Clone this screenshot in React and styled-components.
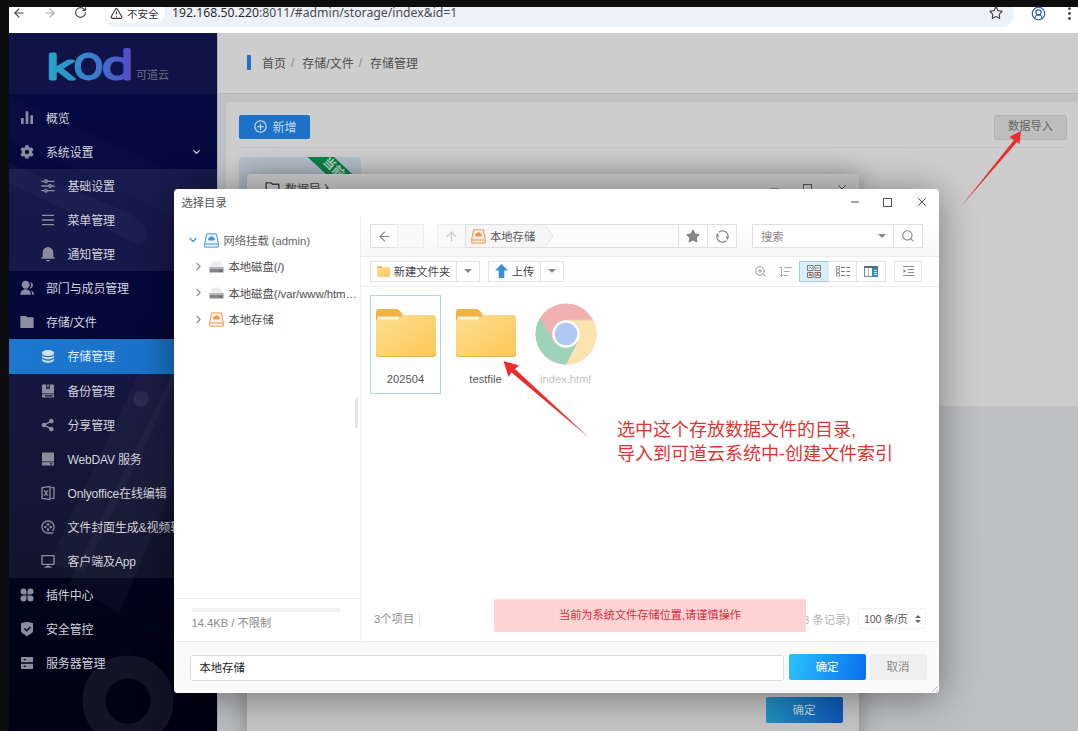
import React from 'react';
import styled, { createGlobalStyle, css } from 'styled-components';
import { FaCog, FaStar } from 'react-icons/fa';
import {
    RiBarChartFill, RiEqualizerLine, RiMenuLine, RiNotification3Fill, RiGroupFill, RiFolderFill,
    RiDatabase2Fill, RiShareFill, RiFileExcel2Line, RiMovie2Line, RiRefreshLine,
    RiComputerLine, RiShieldCheckFill, RiServerFill, RiAddCircleLine, RiFolderLine
} from 'react-icons/ri';
import {
    ArrowLeft, ArrowRight, ArrowUp, RotateCw, TriangleAlert, Star, CircleUserRound, EllipsisVertical,
    ChevronDown, ChevronRight, Minus, X, Search, ZoomIn
} from 'lucide-react';

const GearIcon = styled(FaCog)`
padding: 1px;
`;

const PluginIcon = () => (
    <svg viewBox="-1 -1 16 16" fill="currentColor">
        <path d="M3.5 0.5a3 3 0 0 1 3 3v3h-3a3 3 0 0 1 0-6zM10.5 0.5a3 3 0 0 1 0 6h-3v-3a3 3 0 0 1 3-3zM3.5 7.5h3v3a3 3 0 1 1-3-3zM7.5 7.5h3a3 3 0 1 1-3 3z" />
    </svg>
);

const DavIcon = () => (
    <svg viewBox="0 0 16 16" fill="currentColor">
        <path d="M3 1.500h10a1 1 0 0 1 1 1V10.500H2V2.500a1 1 0 0 1 1-1z" />
        <path d="M2 11.300h12V14a.6.6 0 0 1-.6.6H2.600A.6.6 0 0 1 2 14zM10 12.300v1.300h2.600v-1.300z" fillRule="evenodd" />
    </svg>
);

const BackupIcon = () => (
    <svg viewBox="0 0 16 16" fill="currentColor">
        <path d="M3 1.500h3.200v5.200L8 5.300l1.800 1.400V1.500H13a1 1 0 0 1 1 1V10.500H2V2.500a1 1 0 0 1 1-1z" />
        <path d="M7.200 1.500h1.600v2.400H7.200z" />
        <path d="M2 11.300h12V14a.6.6 0 0 1-.6.6H2.600A.6.6 0 0 1 2 14zM5 12.300v1.300h7.600v-1.300z" fillRule="evenodd" />
    </svg>
);

const menu = [
    { items: [
        { icon: <RiBarChartFill />, name: '概览' },
        { icon: <GearIcon />, name: '系统设置', open: true },
    ] },
    { sub: true, items: [
        { icon: <RiEqualizerLine />, name: '基础设置' },
        { icon: <RiMenuLine />, name: '菜单管理' },
        { icon: <RiNotification3Fill />, name: '通知管理' },
    ] },
    { items: [
        { icon: <RiGroupFill />, name: '部门与成员管理' },
        { icon: <RiFolderFill />, name: '存储/文件' },
    ] },
    { sub: true, items: [
        { icon: <RiDatabase2Fill />, name: '存储管理', active: true },
        { icon: <BackupIcon />, name: '备份管理' },
        { icon: <RiShareFill />, name: '分享管理' },
        { icon: <DavIcon />, name: 'WebDAV 服务' },
        { icon: <RiFileExcel2Line />, name: 'Onlyoffice在线编辑' },
        { icon: <RiMovie2Line />, name: '文件封面生成&视频转码' },
        { icon: <RiComputerLine />, name: '客户端及App' },
    ] },
    { items: [
        { icon: <PluginIcon />, name: '插件中心' },
        { icon: <RiShieldCheckFill />, name: '安全管控' },
        { icon: <RiServerFill />, name: '服务器管理' },
    ] },
];

const Logo = () => (
    <svg width="92" height="60" viewBox="-4 -14 92 60">
        <defs>
            <linearGradient id="kod" gradientUnits="userSpaceOnUse" x1="0" y1="0" x2="84" y2="0">
                <stop offset="0" stopColor="#26a5c4" />
                <stop offset="0.5" stopColor="#3a7fce" />
                <stop offset="1" stopColor="#5548c6" />
            </linearGradient>
        </defs>
        <g fill="url(#kod)" stroke="url(#kod)" strokeWidth="2.8" strokeLinejoin="round" fontFamily="Roboto, sans-serif" fontWeight="300">
            <text x="-2" y="31" fontSize="34" textLength="27" lengthAdjust="spacingAndGlyphs">k</text>
            <text x="25" y="31" fontSize="46" textLength="29" lengthAdjust="spacingAndGlyphs">o</text>
            <text x="53" y="31" fontSize="39" textLength="31" lengthAdjust="spacingAndGlyphs">d</text>
        </g>
    </svg>
);

const SideArt = () => (
    <svg width="208" height="698" viewBox="0 0 208 698" fill="none">
        <path d="M0 130L120 180Q150 200 130 212L0 150z" fill="#fff" fillOpacity="0.03" />
        <path d="M0 62L208 160V205L0 105z" fill="#fff" fillOpacity="0.015" />
        <path d="M145 308H185L75 540L40 530z" fill="#fff" fillOpacity="0.03" />
        <path d="M180 308L208 350L110 580L60 550z" fill="#fff" fillOpacity="0.03" />
        <circle cx="132" cy="366" r="8" fill="#fff" fillOpacity="0.07" />
        <circle cx="119" cy="668" r="34" stroke="#fff" strokeOpacity="0.07" strokeWidth="23" />
    </svg>
);

const Disk = ({ color }) => (
    <svg width="15" height="15" viewBox="0 0 15 15" fill="none" stroke={color}>
        <path d="M2.6 0.9h9.8l1.9 9.4v3.8H0.7v-3.8z" fill={color} fillOpacity="0.08" />
        <path d="M0.7 11h13.6" />
        <path d="M5 7.6a1.6 1.6 0 0 1 0.5-3 2.2 2.2 0 0 1 4 0 1.6 1.6 0 0 1 0.5 3z" fill={color} stroke="none" />
    </svg>
);

const Drive = () => (
    <svg width="15" height="15" viewBox="0 0 15 15">
        <path d="M3.5 2.5h8l3 6.500H0.5z" fill="#ececed" />
        <path d="M0.5 8.5h14v5H0.5z" fill="#848588" />
        <path d="M0.5 8.5h14v1.5H0.5z" fill="#b5b6b8" />
        <path d="M10 11.500h3v1h-3z" fill="#555" />
    </svg>
);

const Folder = ({ w = 60, h = 48 }) => (
    <svg width={w} height={h} viewBox="0 0 60 48">
        <defs>
            <linearGradient id="fold" x1="0" y1="0" x2="1" y2="1">
                <stop offset="0" stopColor="#ffe092" />
                <stop offset="1" stopColor="#fcc654" />
            </linearGradient>
        </defs>
        <path d="M0 3a3 3 0 0 1 3-3h17c3 0 4 1.500 5 3.500L27 6h30v12H0z" fill="#f2b342" />
        <path d="M1.500 7.500h22v6h-22z" fill="#fff4d6" />
        <path d="M0 13c0-2 1-2.600 3-2.600h18c3 0 4-4.400 7-4.400h29a3 3 0 0 1 3 3v36a3 3 0 0 1-3 3H3a3 3 0 0 1-3-3z" fill="url(#fold)" />
        <path d="M0 44.500a3 3 0 0 0 3 3h54a3 3 0 0 0 3-3" fill="none" stroke="#e2b047" />
    </svg>
);

const Chrome = () => (
    <svg width="62" height="62" viewBox="-31 -31 62 62">
        <circle r="30.500" fill="#f1b1b1" />
        <path d="M0 -14H27.100A30.500 30.500 0 0 1 0 30.500L12 7z" fill="#fbe3b0" />
        <path d="M-26 -15.800A30.500 30.500 0 0 0 0 30.500L11.500 8L-12 7z" fill="#9fd3b9" />
        <path d="M0 -14H27" stroke="#f3c9a6" />
        <circle r="13.700" fill="#fff" />
        <circle r="11.300" fill="#afc8f6" />
    </svg>
);

const WindowButtons = () => (
    <Controls>
        <Minus size={12} strokeWidth={2} />
        <i />
        <X size={14} strokeWidth={1.6} />
    </Controls>
);

const App = () => {
    return (
        <Screen>
            <GlobalStyle />
            <BrowserBar>
                <NavIcons>
                    <ArrowLeft size={14} />
                    <ArrowRight size={14} color="#a9a9a9" />
                    <RotateCw size={13} />
                </NavIcons>
                <Address>
                    <Unsafe><TriangleAlert size={13} />不安全</Unsafe>
                    <Url><b>192.168.50.220</b>:8011/#admin/storage/index&amp;id=1</Url>
                    <Star size={14} />
                </Address>
                <CircleUserRound size={15} color="#2a62b8" />
                <EllipsisVertical size={17} />
            </BrowserBar>
            <Page>
                <Sidebar>
                    <Art><SideArt /></Art>
                    <Brand><Logo /><span>可道云</span></Brand>
                    {menu.map((group, i) => (
                        <Group key={i} $sub={group.sub}>
                            {group.items.map((item) => (
                                <MenuItem key={item.name} $sub={group.sub} $active={item.active}>
                                    {item.icon}
                                    <p>{item.name}</p>
                                    {item.open && <ChevronDown size={13} strokeWidth={3} className="arrow" />}
                                </MenuItem>
                            ))}
                        </Group>
                    ))}
                </Sidebar>
                <Main>
                    <Crumbs>
                        <i />
                        <span>首页</span><em>/</em><span>存储/文件</span><em>/</em><span>存储管理</span>
                    </Crumbs>
                    <Card>
                        <Actions>
                            <AddButton><RiAddCircleLine size={15} />新增</AddButton>
                            <ImportButton>数据导入</ImportButton>
                        </Actions>
                        <StoreItem><Ribbon>当前</Ribbon></StoreItem>
                    </Card>
                </Main>
            </Page>

            <BackWindow>
                <TitleBar $back>
                    <RiFolderLine size={17} />
                    <p>数据导入</p>
                    <WindowButtons />
                </TitleBar>
                <BackFooter><OkButton $dim>确定</OkButton></BackFooter>
                <Grip $dim />
            </BackWindow>

            <Picker>
                <TitleBar>
                    <p>选择目录</p>
                    <WindowButtons />
                </TitleBar>
                <Body>
                    <Tree>
                        <TreeRow $root>
                            <ChevronDown size={12} color="#3f95e4" strokeWidth={2.5} />
                            <Disk color="#3b97ea" />网络挂载 (admin)
                        </TreeRow>
                        <TreeRow><ChevronRight size={13} /><Drive />本地磁盘(/)</TreeRow>
                        <TreeRow><ChevronRight size={13} /><Drive />本地磁盘(/var/www/htm…</TreeRow>
                        <TreeRow><ChevronRight size={13} /><Disk color="#f0964a" />本地存储</TreeRow>
                        <Handle />
                        <Space>
                            <div />
                            <p>14.4KB / 不限制</p>
                        </Space>
                    </Tree>
                    <Content>
                        <PathBar>
                            <Cell $w={28}><ArrowLeft size={15} strokeWidth={1.7} /></Cell>
                            <Cell $w={27} $joined $off />
                            <Cell $w={29} $gap={13} $off><ArrowUp size={15} /></Cell>
                            <PathField>
                                <Crumb><Disk color="#f0964a" />本地存储</Crumb>
                                <svg width="9" height="22" viewBox="0 0 9 22" fill="#f5f5f5" stroke="#e3e3e3">
                                    <path d="M0 0L8 11L0 22" />
                                </svg>
                            </PathField>
                            <Cell $w={30} $joined><FaStar size={14} /></Cell>
                            <Cell $w={30} $joined><RiRefreshLine size={15} /></Cell>
                            <SearchField><p>搜索</p><Caret /></SearchField>
                            <Cell $w={30} $joined><Search size={14} strokeWidth={1.8} /></Cell>
                        </PathBar>
                        <ToolBar>
                            <Tool $w={87}><Folder w={13} h={11} />新建文件夹</Tool>
                            <Tool $w={24} $joined><Caret /></Tool>
                            <Tool $w={53} $gap={8}>
                                <svg width="13" height="14" viewBox="0 0 13 14"><path d="M6.500 0L13 6.500H9.300V14H3.700V6.500H0z" fill="#3b8fd4" /></svg>
                                上传
                            </Tool>
                            <Tool $w={24} $joined><Caret /></Tool>
                            <Views>
                                <ZoomIn size={13} strokeWidth={1.8} />
                                <svg width="13" height="13" viewBox="0 0 13 13" fill="none" stroke="#a5a5a5">
                                    <path d="M2.500 2v9M0.500 9.500l2 2 2-2M0.500 2.500h2M5 2.500h7.500M5 6.500h5.500M5 10.500h4" />
                                </svg>
                            </Views>
                            <Tool $w={30} $on>
                                <svg width="14" height="13" viewBox="0 0 14 13" fill="none" stroke="#777">
                                    <path d="M0.500 0.500h5.500v5h-5.500zM8 0.500h5.500v5H8zM0.500 7.500h5.500v5h-5.500zM8 7.500h5.500v5H8z" fill="#f6fbfd" />
                                    <path d="M2 4l1-2 2 2M9.500 4l1-2 2 2" stroke="#7b8b86" />
                                    <path d="M2 11l1-2 2 2M9.500 11l1-2 2 2" stroke="#c0554c" strokeWidth="1.400" />
                                </svg>
                            </Tool>
                            <Tool $w={29} $joined>
                                <svg width="14" height="11" viewBox="0 0 14 11" fill="none" stroke="#999">
                                    <path d="M0.500 0.500h3v2.500h-3zM0.500 4h3v2.500h-3zM0.500 7.500h3V10h-3z" />
                                    <path d="M5 1.500h4M10.500 1.500H14M5 5.500h4M10.500 5.500H14M5 9.500h4M10.500 9.500H14" stroke="#777" />
                                </svg>
                            </Tool>
                            <Tool $w={30} $joined>
                                <svg width="14" height="11" viewBox="0 0 14 11">
                                    <path d="M0.500 0.500h13v10h-13z" fill="#fff" stroke="#6f8593" />
                                    <path d="M8 0h6v11H8z" fill="#3487c7" />
                                    <path d="M0 0h14v2H0z" fill="#566f80" />
                                    <path d="M4.500 2v9" stroke="#aab8c0" />
                                    <path d="M10 4.500h3M10 6.500h3M10 8.500h3" stroke="#fff" strokeWidth="0.800" />
                                </svg>
                            </Tool>
                            <Tool $w={28} $gap={8}>
                                <svg width="11" height="10" viewBox="0 0 11 10" fill="none" stroke="#8a8a8a">
                                    <path d="M0 0.500h11M5 3.500h6M5 6.500h6M0 9.500h11" />
                                    <path d="M0.500 3L3 5L0.500 7z" fill="#8a8a8a" stroke="none" />
                                </svg>
                            </Tool>
                        </ToolBar>
                        <Files>
                            <File $selected><Folder /><p>202504</p></File>
                            <File><Folder /><p>testfile</p></File>
                            <File $faded><Chrome /><p>index.html</p></File>
                        </Files>
                        <Status>
                            <p>3个项目</p>
                            <Records>3 条记录)</Records>
                            <PageSize>
                                100 条/页
                                <svg width="6" height="8" viewBox="0 0 6 8" fill="#666"><path d="M3 0l3 3H0zM3 8L0 5h6z" /></svg>
                            </PageSize>
                        </Status>
                    </Content>
                </Body>
                <Footer>
                    <NameInput>本地存储</NameInput>
                    <OkButton>确定</OkButton>
                    <CancelButton>取消</CancelButton>
                </Footer>
                <Toast>当前为系统文件存储位置,请谨慎操作</Toast>
                <Grip />
            </Picker>

            <Note>选中这个存放数据文件的目录,<br />导入到可道云系统中-创建文件索引</Note>
            <Arrows>
                <svg width="1078" height="731" viewBox="0 0 1078 731" fill="#ea2c2a">
                    <path d="M961 206.500L1014 140L1009.500 137L1021 131L1019.500 144L1017 142z" />
                    <path d="M590 438.500L511.500 372.500L508.500 377L503.500 361L519 365.500L515 369z" />
                </svg>
            </Arrows>
        </Screen>
    );
};

export default App;

const GlobalStyle = createGlobalStyle`
* { box-sizing: border-box; }
body {
margin: 0;
background: #0d0d0d;
font-family: "Liberation Sans", "Noto Sans CJK SC", sans-serif;
font-size: 12px;
overflow: hidden;
}
p { margin: 0; }
svg { flex: none; display: block; }
`;

const Screen = styled.div`
position: relative;
width: 1078px;
height: 731px;
padding: 7px 0 0 9px;
overflow: hidden;
background: #0d0d0d;
`;

const BrowserBar = styled.div`
display: flex;
height: 26px;
background: #fff;
padding-right: 2px;
color: #444;
align-items: flex-start;

> svg:nth-of-type(1) { margin: -1px 15px 0 17px; }
> svg:nth-of-type(2) { margin: -2px -2px 0 auto; }
`;

const NavIcons = styled.div`
display: flex;
gap: 17px;
width: 96px;
padding: 0 0 0 3px;
margin-top: -1px;
`;

const Address = styled.div`
display: flex;
width: 909px;
height: 20px;
background: #edf1fa;
border-radius: 0 0 12px 12px;

> svg { margin: -1px 11px 0 auto; }
`;

const Unsafe = styled.div`
display: flex;
align-items: center;
gap: 4px;
width: 60px;
height: 16px;
padding: 0 0 4px 5px;
background: #fff;
border-radius: 0 0 10px 10px;
white-space: nowrap;
font-size: 10.5px;
color: #333;
`;

const Url = styled.div`
margin: -1px 0 0 7px;
font: 12.25px/14px "Noto Sans", sans-serif;
white-space: nowrap;
color: #4b4b4f;

b { font-weight: 400; color: #2c2c2e; }
`;

const Page = styled.div`
display: flex;
height: 698px;
`;

const Sidebar = styled.div`
position: relative;
width: 209px;
border-right: 1px solid #a9afba;
background: linear-gradient(#060a44, #05083a 40%, #02041d 75%, #010212);
overflow: hidden;
`;

const Art = styled.div`
position: absolute;
inset: 0;
`;

const Brand = styled.div`
position: relative;
display: flex;
height: 61px;
margin-bottom: 7px;
padding: 1px 0 0 36px;
background: #0f1347;

span {
    margin: 32px 0 0 -1px;
    font-size: 11px;
    color: #6c6f7e;
    white-space: nowrap;
}
`;

const Group = styled.div`
position: relative;
background: ${({ $sub }) => ($sub ? 'rgba(110, 110, 140, 0.16)' : 'none')};
`;

const MenuItem = styled.div`
display: flex;
align-items: center;
height: 34.07px;
padding-left: ${({ $sub }) => ($sub ? '31px' : '10px')};
color: ${({ $active }) => ($active ? '#e2edf7' : '#d2d3dc')};
background: ${({ $active }) => ($active ? 'linear-gradient(90deg, #1b78cf, #1a70c4)' : 'none')};
white-space: nowrap;

> svg {
    width: 16px;
    height: 16px;
    color: ${({ $active }) => ($active ? '#d5dfe8' : '#8b8d9f')};
}
p {
    margin: -1px 0 0 ${({ $sub }) => ($sub ? '11.500px' : '11px')};
    letter-spacing: -0.15px;
}
.arrow {
    width: 11px;
    margin: 0 15px 0 auto;
    color: #c9cad4;
}
`;

const Main = styled.div`
flex: 1;
background: linear-gradient(#bec2c3, #bcc0c2);
`;

const Crumbs = styled.div`
display: flex;
align-items: center;
height: 61px;
padding: 0 0 1px 29px;
background: #cdcdcd;
border-bottom: 1px solid #b5b5b5;
color: #4f4f4f;

i {
    width: 4px;
    height: 15px;
    margin-right: 11px;
    background: #1d72c8;
    border-radius: 1px;
}
em { margin: 0 8px 0 5px; font-style: normal; color: #8b8b8b; }
`;

const Card = styled.div`
height: 304px;
margin: 8px 0 0 8px;
padding: 13px 11px 0 13px;
background: #cdcdcd;
border-radius: 4px 0 0 0;
`;

const Actions = styled.div`
display: flex;
justify-content: space-between;
height: 33px;
border-bottom: 1px solid #c4c4c4;
`;

const AddButton = styled.div`
display: flex;
align-items: center;
justify-content: center;
gap: 4px;
width: 71px;
height: 24px;
padding: 0 0 2px 1px;
background: #1b72c8;
border-radius: 2px;
color: #c4d6e8;
`;

const ImportButton = styled.div`
width: 73px;
height: 25px;
line-height: 21px;
background: #bebebe;
border: 1px solid #b2b2b2;
border-radius: 3px;
color: #666;
font-size: 11.2px;
text-align: center;
`;

const StoreItem = styled.div`
position: relative;
width: 122px;
height: 90px;
margin-top: 9px;
background: #b5c0cd;
border-radius: 4px;
overflow: hidden;
`;

const Ribbon = styled.div`
position: absolute;
top: 8px;
right: -28px;
width: 100px;
height: 18px;
line-height: 17px;
padding-right: 16px;
background: #0c8346;
color: #b9d6c5;
font-weight: 700;
text-align: center;
transform: rotate(43deg);
`;

const BackWindow = styled.div`
position: absolute;
left: 247px;
top: 174px;
width: 612px;
height: 580px;
display: flex;
flex-direction: column;
justify-content: space-between;
background: #c6c6c6;
border-radius: 4px;
box-shadow: 0 0 24px rgba(0, 0, 0, 0.3);
`;

const Picker = styled.div`
position: absolute;
left: 173.5px;
top: 189px;
width: 765.5px;
height: 504px;
display: flex;
flex-direction: column;
background: #fff;
border-radius: 4px;
box-shadow: 0 4px 38px rgba(0, 0, 0, 0.42);
`;

const TitleBar = styled.div`
display: flex;
align-items: center;
height: 26px;
padding: ${({ $back }) => ($back ? '3px 10px 0 17px' : '0 10px 0 8px')};
color: ${({ $back }) => ($back ? '#444' : '#555')};

p {
    flex: 1;
    margin: 0 0 1px ${({ $back }) => ($back ? '4px' : '0')};
    font-size: ${({ $back }) => ($back ? '12px' : '11.300px')};
}
`;

const Controls = styled.div`
display: flex;
align-items: center;
gap: 22px;
color: #444;

i { width: 9px; height: 9px; margin: 0 1px 0 0; border: 1px solid #555; }
svg:last-child { margin-left: 0; }
`;

const BackFooter = styled.div`
height: 57px;
padding-left: 518.5px;
`;

const Body = styled.div`
display: flex;
height: 426px;
`;

const Tree = styled.div`
position: relative;
display: flex;
flex-direction: column;
width: 187.5px;
padding-top: 12px;
border-right: 1px solid #eeeff0;
`;

const TreeRow = styled.div`
display: flex;
align-items: center;
height: 26.3px;
padding-left: ${({ $root }) => ($root ? '13px' : '18px')};
color: ${({ $root }) => ($root ? '#666' : '#4c4c4c')};
font-size: 11.4px;
letter-spacing: -0.08px;
white-space: nowrap;

svg:first-child { margin-right: ${({ $root }) => ($root ? '5px' : '4px')}; ${({ $root }) => !$root && 'color: #8d8d8d;'} }
svg:nth-child(2) { margin-right: 5px; }
`;

const Handle = styled.div`
position: absolute;
right: 2px;
top: 183px;
width: 3px;
height: 30px;
background: #e6e6e6;
`;

const Space = styled.div`
height: 43px;
margin-top: auto;
padding: 9px 20px 0 18px;
border-top: 1px solid #edf0f1;
color: #8a8a8a;

div { height: 4px; background: #f3f3f3; margin-bottom: 3px; }
p { font-size: 11.2px; line-height: 16px; }
`;

const Content = styled.div`
display: flex;
flex-direction: column;
flex: 1;
`;

const bar = css`
display: flex;
align-items: center;
padding-left: 9px;
border-bottom: 1px solid #ececec;
`;

const PathBar = styled.div`
${bar}
height: 42px;
padding-top: 1px;
background: linear-gradient(#fff, #f8f8f8);
`;

const ToolBar = styled.div`
${bar}
height: 30px;
background: #fdfdfd;
`;

const Cell = styled.div`
display: flex;
align-items: center;
justify-content: center;
width: ${({ $w }) => $w}px;
height: 24px;
margin-left: ${({ $joined, $gap }) => ($joined ? -1 : $gap || 0)}px;
border: 1px solid ${({ $off }) => ($off ? '#eee' : '#e0e0e0')};
background: ${({ $off }) => ($off ? '#f9f9f9' : '#fdfdfd')};
color: ${({ $off }) => ($off ? '#ccc' : '#858585')};
`;

const PathField = styled.div`
display: flex;
width: 214px;
height: 24px;
margin-left: -1px;
border: 1px solid #e0e0e0;
background: #fcfcfc;
`;

const Crumb = styled.div`
display: flex;
align-items: center;
gap: 4px;
width: 79px;
padding-left: 5px;
background: #f5f5f5;
color: #555;
font-size: 11.3px;
`;

const SearchField = styled.div`
display: flex;
align-items: center;
justify-content: space-between;
width: 142px;
height: 24px;
margin-left: 15px;
padding: 0 7px 0 8px;
border: 1px solid #e0e0e0;
background: #fff;
color: #8b8b8b;
font-size: 11.3px;
`;

const Caret = styled.i`
border: 4px solid transparent;
border-top-color: #888;
border-bottom: 0;
`;

const Tool = styled(Cell)`
height: 21px;
gap: 4px;
padding-bottom: 1px;
font-size: 11.3px;
white-space: nowrap;
color: #444;
background: ${({ $on }) => ($on ? '#d8eefa' : '#fff')};
border-color: ${({ $on }) => ($on ? '#9fcbe2' : '#e4e4e4')};
`;

const Views = styled.div`
display: flex;
gap: 12px;
margin: 0 7px 0 auto;
color: #999;

& ~ div:last-child { margin-right: 17px; }
`;

const Files = styled.div`
display: flex;
gap: 9px;
flex: 1;
padding: 8px 0 0 9px;
`;

const File = styled.div`
display: flex;
flex-direction: column;
align-items: center;
justify-content: flex-end;
width: 71px;
height: 99px;
padding-bottom: 6px;
border: 1px solid ${({ $selected }) => ($selected ? '#a8d8ef' : 'transparent')};
color: ${({ $faded }) => ($faded ? '#c3c3c3' : '#555')};

p {
    margin-top: ${({ $faded }) => ($faded ? '7px' : '15px')};
    font-size: 11.2px;
    line-height: 15px;
}
`;

const Status = styled.div`
display: flex;
align-items: center;
height: 43px;
padding: 0 13px 2px 13px;
color: #8e8e8e;
font-size: 11.3px;

> p { padding-right: 5px; border-right: 1px solid #e5e5e5; line-height: 14px; }
`;

const Records = styled.div`
margin-left: auto;
color: #b5b5b5;
`;

const PageSize = styled.div`
display: flex;
align-items: center;
justify-content: space-between;
width: 68px;
height: 21px;
margin-left: 8px;
padding: 0 4px 0 5px;
border: 1px solid #f2f2f2;
border-radius: 3px;
font-size: 10.6px;
letter-spacing: -0.15px;
color: #555;
`;

const Footer = styled.div`
display: flex;
flex: 1;
padding: 12px 12px 0 16px;
background: #fafafa;
border-top: 1px solid #ececec;
border-radius: 0 0 4px 4px;
`;

const NameInput = styled.div`
width: 594px;
height: 26px;
margin: 1px 5px 0 0;
padding-left: 9px;
line-height: 24px;
background: #fff;
border: 1px solid #dedede;
border-radius: 3px;
font-size: 11.3px;
color: #222;
`;

const OkButton = styled.div`
width: 77px;
height: 26px;
line-height: 27px;
border-radius: 2px;
background: ${({ $dim }) => ($dim ? 'linear-gradient(100deg, #2396c4, #0c55ba)' : 'linear-gradient(100deg, #2bc1fb, #0a70ee)')};
color: ${({ $dim }) => ($dim ? '#c5d5e6' : '#fff')};
font-size: 11.5px;
text-align: center;
`;

const CancelButton = styled(OkButton)`
width: 57px;
margin-left: 4px;
background: #efefef;
color: #888;
`;

const Toast = styled.div`
position: absolute;
left: 320.5px;
top: 410px;
width: 312px;
height: 33px;
line-height: 32px;
background: #ffd2d4;
border-radius: 2px;
color: #e02c3c;
font-size: 11.2px;
text-align: center;
`;

const Grip = styled.div`
position: absolute;
right: 1px;
bottom: ${({ $dim }) => ($dim ? '24px' : '1px')};
width: 9px;
height: 9px;
background: repeating-linear-gradient(135deg, transparent 0 2px, #bbb 2px 3px);
clip-path: polygon(100% 0, 100% 100%, 0 100%);
`;

const Note = styled.div`
position: absolute;
left: 617px;
top: 418px;
font-size: 18px;
line-height: 24px;
color: #dd3530;
white-space: nowrap;
`;

const Arrows = styled.div`
position: absolute;
inset: 0;
pointer-events: none;
`;
